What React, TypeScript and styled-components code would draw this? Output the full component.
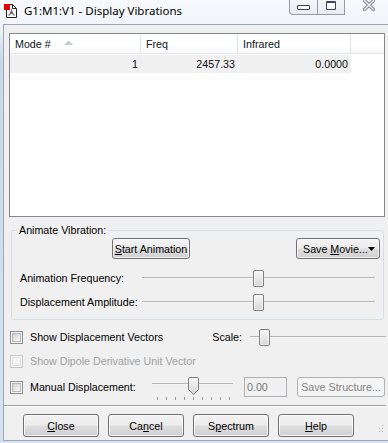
import React from "react";
import styled, { createGlobalStyle } from "styled-components";

const GlobalStyle = createGlobalStyle`
  html, body {
    margin: 0;
    padding: 0;
  }
  body {
    width: 388px;
    height: 443px;
    overflow: hidden;
    background: #d3e0ee;
    font-family: "Liberation Sans", Arial, sans-serif;
    font-size: 10.7px;
    color: #000;
  }
`;

const Window = styled.div`
  width: 396px;
  height: 443px;
  display: flex;
  flex-direction: column;
  background: linear-gradient(to bottom, #f7f9fc 0, #f1f5f9 24px, #c8d8e9 60px, #d6e2ef 100%);
`;

const TitleBar = styled.div`
  height: 24px;
  flex: none;
  display: flex;
  align-items: flex-start;
`;

const AppIcon = styled.svg`
  flex: none;
  margin: 4px 0 0 4px;
`;

const Caption = styled.div`
  margin: 4px 0 0 7px;
  font-family: "Noto Sans", "Open Sans", sans-serif;
  font-size: 11.5px;
  line-height: 14px;
  white-space: nowrap;
`;

const CaptionButtons = styled.div`
  margin-left: auto;
  width: 107px;
  height: 15px;
  display: flex;
  flex: none;
`;

const CapButton = styled.div<{ $w: number; $first?: boolean }>`
  width: ${({ $w }) => $w}px;
  height: 15px;
  box-sizing: border-box;
  border-bottom: 1px solid #959ba3;
  border-right: 1px solid #959ba3;
  border-left: ${({ $first }) => ($first ? "1px solid #959ba3" : "none")};
  border-bottom-left-radius: ${({ $first }) => ($first ? "4px" : "0")};
  background: linear-gradient(to bottom, #f4f6f9, #e9edf2);
  display: flex;
  justify-content: center;
  padding-top: 1px;
`;

const CloseButton = styled.div`
  flex: 1;
  height: 15px;
  display: flex;
  padding-left: 18px;
`;

const MinGlyph = styled.div`
  margin-top: 4px;
  width: 13px;
  height: 5px;
  box-sizing: border-box;
  border: 1px solid #3d4757;
  border-radius: 1px;
  background: #fff;
`;

const MaxGlyph = styled.div`
  width: 10px;
  height: 9px;
  box-sizing: border-box;
  border: 1px solid #3d4757;
  border-top-width: 2px;
  border-radius: 1px;
  background: #fff;
`;

const Client = styled.div`
  margin-left: 3px;
  height: 417px;
  box-sizing: border-box;
  border: 1px solid #9ea6af;
  background: #f0f0f0;
  display: flex;
  flex-direction: column;
`;

/* list view */

const ListView = styled.div`
  margin: 8px 0 0 5px;
  width: 376px;
  height: 184px;
  flex: none;
  box-sizing: border-box;
  border: 1px solid #828790;
  background: #fff;
`;

const Header = styled.div`
  display: flex;
  height: 20px;
  box-sizing: border-box;
  border-bottom: 1px solid #e5e5e5;
  background: linear-gradient(to bottom, #ffffff 0, #ffffff 55%, #f7f8fa 100%);
`;

const HeaderCell = styled.div<{ $w?: number }>`
  ${({ $w }) => ($w ? `width: ${$w}px; flex: none;` : "flex: 1;")}
  box-sizing: border-box;
  border-right: ${({ $w }) => ($w ? "1px solid #e3e5e8" : "none")};
  padding-left: 5px;
  display: flex;
  align-items: center;
  color: #0e1522;
`;

const SortArrow = styled.svg`
  margin: 0 0 3px 13px;
`;

const Row = styled.div`
  display: flex;
  height: 18px;
  margin-top: 1px;
`;

const Cell = styled.div<{ $w: number }>`
  width: ${({ $w }) => $w}px;
  flex: none;
  box-sizing: border-box;
  padding-right: 3px;
  text-align: right;
  line-height: 18px;
  background: #f0f0f0;
  color: #0b0b0b;
`;

/* group box */

const Group = styled.fieldset`
  margin: 7px 0 0 7px;
  width: 373px;
  flex: none;
  box-sizing: border-box;
  padding: 1px 0 5px 0;
  border: 1px solid #d5dfe5;
  border-radius: 3px;
  min-inline-size: 0;
`;

const GroupLabel = styled.legend`
  margin-left: 5px;
  padding: 0 2px;
  line-height: 13px;
`;

const ButtonRow = styled.div`
  display: flex;
  height: 21px;
  padding: 0 3px 0 100px;
`;

const Button = styled.button<{ $w: number; $h?: number }>`
  width: ${({ $w }) => $w}px;
  height: ${({ $h }) => $h ?? 21}px;
  flex: none;
  box-sizing: border-box;
  margin: 0;
  padding: 0;
  border: 1px solid #707070;
  border-radius: 3px;
  background: linear-gradient(to bottom, #f3f3f3 0%, #ececec 48%, #dedede 52%, #d0d0d0 100%);
  box-shadow: inset 0 0 0 1px rgba(255, 255, 255, 0.75);
  font-family: "Liberation Sans", Arial, sans-serif;
  font-size: 10.7px;
  white-space: nowrap;
  color: #000;
  display: flex;
  align-items: center;
  justify-content: center;

  &:disabled {
    border-color: #adb2b5;
    background: #f4f4f4;
    box-shadow: none;
    color: #838383;
  }
`;

const DropButton = styled(Button)`
  margin-left: auto;
  justify-content: space-between;
  padding: 0 4px 0 6px;
`;

const SliderRow = styled.div<{ $first?: boolean }>`
  display: flex;
  align-items: center;
  height: 24px;
  padding-left: 8px;
  margin-top: ${({ $first }) => ($first ? 7 : 0)}px;
`;

const SliderLabel = styled.span<{ $w: number }>`
  width: ${({ $w }) => $w}px;
  flex: none;
  white-space: nowrap;
`;

const SliderBox = styled.div<{ $w: number }>`
  width: ${({ $w }) => $w}px;
  height: 17px;
  flex: none;
  display: flex;
  align-items: center;
`;

const Track = styled.div<{ $top?: number }>`
  flex: 1 1 auto;
  min-width: 0;
  height: 1px;
  margin-top: ${({ $top }) => $top ?? 0}px;
  background: #b7b7b7;
  border-bottom: 1px solid #f4f4f4;
`;

const Thumb = styled.div`
  width: 11px;
  height: 17px;
  flex: none;
  box-sizing: border-box;
  border: 1px solid #7f7f7f;
  border-radius: 2px;
  background: linear-gradient(to bottom, #f6f6f6 0%, #e8e8e8 50%, #d6d6d6 100%);
  box-shadow: inset 0 0 0 1px rgba(255, 255, 255, 0.6);
`;

/* check rows */

const CheckRow = styled.div<{ $h?: number; $mt?: number }>`
  display: flex;
  align-items: center;
  width: 382px;
  height: ${({ $h }) => $h ?? 24}px;
  margin-top: ${({ $mt }) => $mt ?? 0}px;
  padding-left: 6px;
  box-sizing: border-box;
  flex: none;
`;

const CheckBox = styled.span<{ $disabled?: boolean }>`
  width: 13px;
  height: 13px;
  flex: none;
  box-sizing: border-box;
  border: 1px solid ${({ $disabled }) => ($disabled ? "#c8c8c8" : "#8e8f8f")};
  background: #f6f6f6;
  display: flex;
  align-items: center;
  justify-content: center;

  &::after {
    content: "";
    width: 9px;
    height: 9px;
    box-sizing: border-box;
    border: 1px solid ${({ $disabled }) => ($disabled ? "#e0e0e0" : "#b4b7bb")};
    background: ${({ $disabled }) =>
      $disabled ? "#f4f4f4" : "linear-gradient(135deg, #cfd1d4 0%, #eeeeee 70%, #f8f8f8 100%)"};
  }
`;

const CheckLabel = styled.span<{ $w?: number; $disabled?: boolean }>`
  margin-left: 7px;
  white-space: nowrap;
  color: ${({ $disabled }) => ($disabled ? "#a2a2a2" : "#000")};
  ${({ $w }) => ($w ? `width: ${$w}px; flex: none;` : "")}
`;

const ScaleGroup = styled.div`
  margin-left: auto;
  display: flex;
  align-items: center;
  gap: 8px;
`;

const ManualSlider = styled.div`
  width: 85px;
  height: 26px;
  flex: none;
  display: flex;
  flex-direction: column;
`;

const ManualTop = styled.div`
  height: 20px;
  padding: 0 2px;
  display: flex;
  align-items: flex-start;
`;

const ManualThumb = styled.svg`
  flex: none;
  margin-top: 3px;
`;

const TickRow = styled.div`
  margin-top: 3px;
  padding-left: 7px;
  display: flex;
  gap: 8px;
`;

const Tick = styled.span`
  width: 1px;
  height: 3px;
  background: #9a9a9a;
`;

const TextBox = styled.div`
  margin-left: 9px;
  width: 43px;
  height: 20px;
  flex: none;
  box-sizing: border-box;
  border: 1px solid #afb3b8;
  background: #f0f0f0;
  color: #7a7a7a;
  padding-left: 2px;
  line-height: 18px;
`;

const Separator = styled.div`
  margin-top: 5px;
  width: 382px;
  height: 1px;
  flex: none;
  background: #a0a0a0;
  border-bottom: 1px solid #ffffff;
`;

const FooterRow = styled.div`
  margin-top: 7px;
  display: flex;
  gap: 9px;
  width: 382px;
  height: 23px;
  padding-left: 19px;
  box-sizing: border-box;
  flex: none;
`;

const Grip = styled.svg`
  margin: auto 2px 4px auto;
`;

function Slider({ width, value }: { width: number; value: number }) {
  const before = Math.round((width - 11) * value);
  return (
    <SliderBox $w={width}>
      <Track style={{ flex: `0 0 ${before}px` }} />
      <Thumb />
      <Track />
    </SliderBox>
  );
}

export default function App() {
  const ticks = Array.from({ length: 9 }, (_, i) => i);
  return (
    <>
      <GlobalStyle />
      <Window>
        <TitleBar>
          <AppIcon width="13" height="14" viewBox="0 0 13 14">
            <path d="M2.5 0.5 H8.5 L12.5 4.5 V13.5 H2.5 Z" fill="#fff" stroke="#222" />
            <path d="M8.5 0.5 V4.5 H12.5" fill="none" stroke="#222" />
            <path d="M7.5 5 V8.5 M7.5 8.5 L4.5 11.5 M7.5 8.5 L10.5 11.5" stroke="#7a7a7a" strokeWidth="1.3" fill="none" />
            <circle cx="7.5" cy="8.5" r="1.2" fill="#555" />
            <rect x="0" y="0" width="6" height="6" fill="#e80000" />
          </AppIcon>
          <Caption>G1:M1:V1 - Display Vibrations</Caption>
          <CaptionButtons>
            <CapButton $w={29} $first>
              <MinGlyph />
            </CapButton>
            <CapButton $w={27}>
              <MaxGlyph />
            </CapButton>
            <CloseButton>
              <svg width="12" height="11" viewBox="0 0 12 11">
                <path d="M1.5 0.5 L10.5 9.5 M10.5 0.5 L1.5 9.5" stroke="#7d848d" strokeWidth="3.4" strokeLinecap="square" />
                <path d="M1.5 0.5 L10.5 9.5 M10.5 0.5 L1.5 9.5" stroke="#f6f7f9" strokeWidth="1.4" strokeLinecap="square" />
              </svg>
            </CloseButton>
          </CaptionButtons>
        </TitleBar>

        <Client>
          <ListView>
            <Header>
              <HeaderCell $w={131}>
                Mode #
                <SortArrow width="9" height="5" viewBox="0 0 9 5">
                  <path d="M0 5 L4.5 0.5 L9 5 Z" fill="#c5cad1" />
                </SortArrow>
              </HeaderCell>
              <HeaderCell $w={97}>Freq</HeaderCell>
              <HeaderCell $w={113}>Infrared</HeaderCell>
              <HeaderCell />
            </Header>
            <Row>
              <Cell $w={131}>1</Cell>
              <Cell $w={97}>2457.33</Cell>
              <Cell $w={113}>0.0000</Cell>
            </Row>
          </ListView>

          <Group>
            <GroupLabel>Animate Vibration:</GroupLabel>
            <ButtonRow>
              <Button $w={78}>
                <u>S</u>tart Animation
              </Button>
              <DropButton $w={84}>
                <span>
                  Save <u>M</u>ovie...
                </span>
                <svg width="7" height="4" viewBox="0 0 7 4">
                  <path d="M0 0 H7 L3.5 4 Z" fill="#000" />
                </svg>
              </DropButton>
            </ButtonRow>
            <SliderRow $first>
              <SliderLabel $w={122}>Animation Frequency:</SliderLabel>
              <Slider width={233} value={0.5} />
            </SliderRow>
            <SliderRow>
              <SliderLabel $w={122}>Displacement Amplitude:</SliderLabel>
              <Slider width={233} value={0.5} />
            </SliderRow>
          </Group>

          <CheckRow $mt={5}>
            <CheckBox />
            <CheckLabel>Show Displacement Vectors</CheckLabel>
            <ScaleGroup>
              <span>Scale:</span>
              <Slider width={136} value={0.07} />
            </ScaleGroup>
          </CheckRow>
          <CheckRow>
            <CheckBox $disabled />
            <CheckLabel $disabled>Show Dipole Derivative Unit Vector</CheckLabel>
          </CheckRow>
          <CheckRow $h={26} $mt={1}>
            <CheckBox />
            <CheckLabel $w={120}>Manual Displacement:</CheckLabel>
            <ManualSlider>
              <ManualTop>
                <Track $top={9} style={{ flex: "0 0 36px" }} />
                <ManualThumb width="11" height="18" viewBox="0 0 11 18">
                  <defs>
                    <linearGradient id="mthumb" x1="0" y1="0" x2="0" y2="1">
                      <stop offset="0" stopColor="#f6f6f6" />
                      <stop offset="0.5" stopColor="#e8e8e8" />
                      <stop offset="1" stopColor="#d4d4d4" />
                    </linearGradient>
                  </defs>
                  <path d="M0.5 2 Q0.5 0.5 2 0.5 H9 Q10.5 0.5 10.5 2 V12.5 L5.5 17.5 L0.5 12.5 Z" fill="url(#mthumb)" stroke="#7f7f7f" />
                </ManualThumb>
                <Track $top={9} />
              </ManualTop>
              <TickRow>
                {ticks.map((t) => (
                  <Tick key={t} />
                ))}
              </TickRow>
            </ManualSlider>
            <TextBox>0.00</TextBox>
            <Button $w={88} $h={20} disabled style={{ marginLeft: 10 }}>
              Save Structure...
            </Button>
          </CheckRow>

          <Separator />

          <FooterRow>
            <Button $w={76} $h={23}>
              <u>C</u>lose
            </Button>
            <Button $w={76} $h={23}>
              Ca<u>n</u>cel
            </Button>
            <Button $w={76} $h={23}>
              S<u>p</u>ectrum
            </Button>
            <Button $w={76} $h={23}>
              <u>H</u>elp
            </Button>
            <Grip width="7" height="8" viewBox="0 0 7 8">
              <rect x="5" y="0" width="1" height="1" fill="#b5b5b5" />
              <rect x="5" y="3" width="1" height="1" fill="#b5b5b5" />
              <rect x="2" y="3" width="1" height="1" fill="#b5b5b5" />
              <rect x="5" y="6" width="1" height="1" fill="#b5b5b5" />
              <rect x="2" y="6" width="1" height="1" fill="#b5b5b5" />
            </Grip>
          </FooterRow>
        </Client>
      </Window>
    </>
  );
}
